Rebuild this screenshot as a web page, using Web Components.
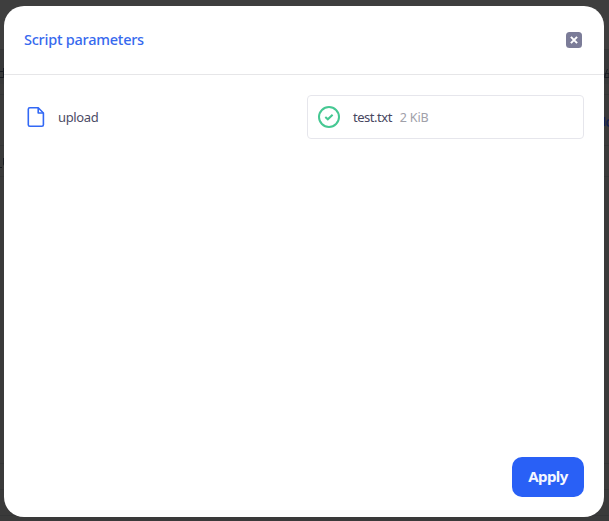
<!DOCTYPE html>
<html lang="en"><head><meta charset="utf-8"><title>Script parameters</title>
<style>
html,body{margin:0;height:100%;overflow:hidden}
body{font-family:"Noto Sans","Open Sans",sans-serif;background:#3b3b3b}
</style></head><body>
<app-backdrop>
<modal-dialog heading="Script parameters">
<param-row label="upload"><file-result name="test.txt" size="2 KiB"></file-result></param-row>
<action-button slot="footer">Apply</action-button>
</modal-dialog>
</app-backdrop>
<script>
const define=(tag,html)=>customElements.define(tag,class extends HTMLElement{
  constructor(){
    super();
    this.attachShadow({mode:'open'}).innerHTML=html;
    this.shadowRoot.querySelectorAll('[data-text]').forEach(n=>{n.textContent=this.getAttribute(n.dataset.text)});
  }
});
define('app-backdrop',`<style>
:host{display:block;position:relative;box-sizing:border-box;width:609px;height:521px;padding:6px 5px 4px 4px;overflow:hidden;background:linear-gradient(#3e3e3e 0 49px,#373839 49px 84px,#3a3a3a 84px)}
i{position:absolute;left:0;width:609px;height:1px;background:#343536}
::slotted(*){position:relative}
</style>
<i style="top:49px"></i><i style="top:94px"></i><i style="top:145px"></i><i style="top:176px"></i><i style="top:463px"></i><i style="top:489px"></i><i style="top:515px"></i>
<svg style="position:absolute;inset:0" width="609" height="521" aria-hidden="true"><path d="M3.5 68v10M0 71.5h3M0 77.5h3M3.5 158v6q0 2 2 2M0 167.5h2" fill="none" stroke="#171a20"/><path d="M607.5 69L604 78M605 73.5h4v4h-4z" fill="none" stroke="#1b1e25"/><path d="M604.5 117v9M609 120q-2 0-2 3t2 3" fill="none" stroke="#142052" stroke-width="1.5"/></svg>
<slot></slot>`);
define('modal-dialog',`<style>
:host{display:flex;flex-direction:column;box-sizing:border-box;width:600px;height:511px;border-radius:20px;background:#fff;overflow:hidden}
header{display:flex;align-items:center;justify-content:space-between;box-sizing:border-box;height:69px;padding:0 22px 0 20px;border-bottom:1px solid #e6e6e8}
h1{margin:0 0 2px;color:#3769ee;font-size:14.5px;font-weight:500;line-height:20px;letter-spacing:-.24px}
main{flex:1;padding:20px 20px 0}
footer{display:flex;justify-content:flex-end;padding:0 20px 20px}
svg{display:block}
</style>
<header><h1 data-text="heading"></h1><svg width="16" height="16" viewBox="0 0 16 16"><rect width="16" height="16" rx="3.5" fill="#7b7c98"/><path d="M4.9 4.9l6.2 6.2M11.1 4.9l-6.2 6.2" stroke="#fff" stroke-width="2"/></svg></header>
<main><slot></slot></main><footer><slot name="footer"></slot></footer>`);
define('param-row',`<style>
:host{display:grid;grid-template-columns:283px 277px;align-items:center}
.label{display:flex;align-items:center;gap:12px;padding-left:2px;color:#4c4c66;font-size:13px;line-height:20px;letter-spacing:-.36px}
svg{display:block}
</style>
<div class="label"><svg width="20" height="22" viewBox="0 0 20 22" fill="none" stroke="#3268f5" stroke-width="1.6" stroke-linejoin="round"><path d="M3.8 1.8h8.4l5.2 5.2v11.7q0 1.5-1.5 1.5H3.8q-1.5 0-1.5-1.5V3.3q0-1.5 1.5-1.5z"/><path d="M12.2 1.8V7h5.2"/></svg><span data-text="label"></span></div><slot></slot>`);
define('file-result',`<style>
:host{display:flex;align-items:center;box-sizing:border-box;width:277px;height:44px;padding-left:9px;border:1px solid #e6e6ec;border-radius:4px;font-size:13px;line-height:20px}
svg{display:block;margin-right:12px}
.name{color:#47475f;letter-spacing:-.48px;margin-right:8px}
.size{color:#a0a0a9;font-size:12.5px;letter-spacing:-.2px;padding-top:1px}
</style>
<svg width="24" height="24" viewBox="0 0 24 24" fill="none" stroke="#46c893" stroke-width="2"><circle cx="12" cy="12" r="10"/><path d="M8.3 12l2.5 2.3 4.8-4.6"/></svg><span class="name" data-text="name"></span><span class="size" data-text="size"></span>`);
define('action-button',`<style>
button{display:block;width:72px;height:40px;padding:0 0 2px;border:0;border-radius:10px;background:#2960f6;color:#f4f7ff;font:700 15px/20px "Noto Sans",sans-serif;letter-spacing:-.55px}
</style><button><slot></slot></button>`);
</script></body></html>
